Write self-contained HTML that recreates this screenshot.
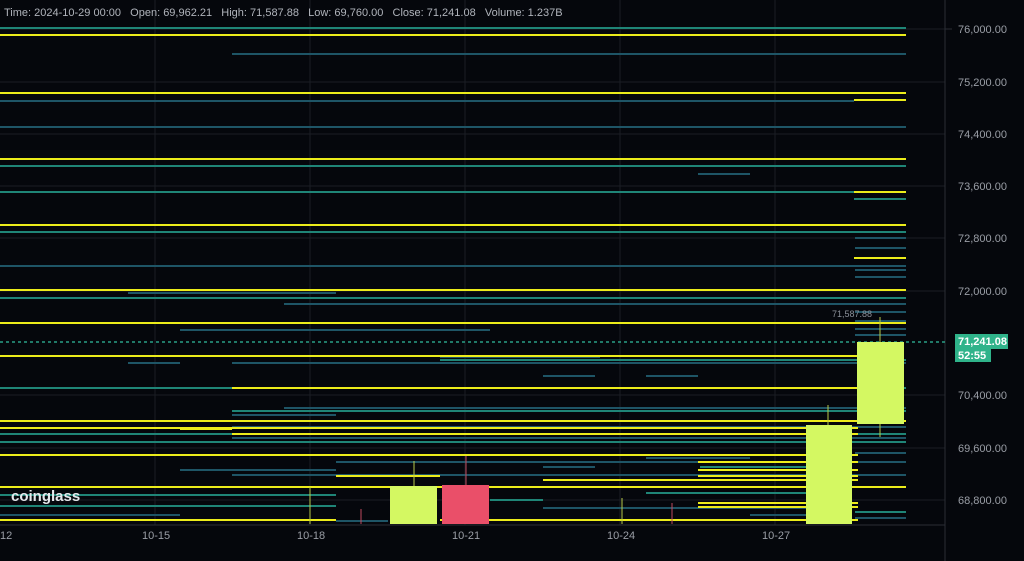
<!DOCTYPE html>
<html><head><style>
html,body{margin:0;padding:0;background:#05070c;width:1024px;height:561px;overflow:hidden;font-family:"Liberation Sans",sans-serif}
</style></head><body>
<svg width="1024" height="561" xmlns="http://www.w3.org/2000/svg" style="position:absolute;left:0;top:0">
<rect width="1024" height="561" fill="#05070c"/>
<g stroke="#1a1d24" stroke-width="1">
<line x1="155" y1="0" x2="155" y2="525"/><line x1="310" y1="0" x2="310" y2="525"/><line x1="465" y1="0" x2="465" y2="525"/><line x1="620" y1="0" x2="620" y2="525"/><line x1="775" y1="0" x2="775" y2="525"/>
<line x1="0" y1="29" x2="945" y2="29"/><line x1="0" y1="82" x2="945" y2="82"/><line x1="0" y1="134" x2="945" y2="134"/><line x1="0" y1="186" x2="945" y2="186"/><line x1="0" y1="238" x2="945" y2="238"/><line x1="0" y1="291" x2="945" y2="291"/><line x1="0" y1="395" x2="945" y2="395"/><line x1="0" y1="448" x2="945" y2="448"/><line x1="0" y1="500" x2="945" y2="500"/>
</g>
<line x1="945" y1="0" x2="945" y2="561" stroke="#2a2d35"/>
<line x1="0" y1="525" x2="945" y2="525" stroke="#2a2d35"/>
<g stroke-width="2">
<!-- teal lines -->
<g stroke="#1f8577">
<line x1="0" y1="28" x2="906" y2="28"/><line x1="0" y1="166" x2="906" y2="166"/><line x1="0" y1="192" x2="854" y2="192"/><line x1="0" y1="232" x2="906" y2="232"/><line x1="0" y1="298" x2="906" y2="298"/><line x1="0" y1="388" x2="906" y2="388"/><line x1="0" y1="434" x2="906" y2="434"/><line x1="0" y1="442" x2="906" y2="442"/><line x1="0" y1="495" x2="336" y2="495"/><line x1="0" y1="506" x2="336" y2="506"/>
<line x1="854" y1="199" x2="906" y2="199"/><line x1="232" y1="411" x2="906" y2="411"/><line x1="440" y1="360" x2="906" y2="360"/><line x1="700" y1="467" x2="850" y2="467"/><line x1="700" y1="480" x2="850" y2="480"/><line x1="646" y1="493" x2="850" y2="493"/><line x1="855" y1="512" x2="906" y2="512"/><line x1="490" y1="500" x2="543" y2="500"/>
</g>
<g stroke="#1e5566">
<line x1="232" y1="54" x2="906" y2="54"/><line x1="0" y1="101" x2="854" y2="101"/><line x1="0" y1="127" x2="906" y2="127"/><line x1="698" y1="174" x2="750" y2="174"/><line x1="0" y1="266" x2="906" y2="266"/><line x1="284" y1="304" x2="906" y2="304"/><line x1="128" y1="293" x2="336" y2="293"/><line x1="180" y1="330" x2="490" y2="330"/><line x1="284" y1="304" x2="336" y2="304"/><line x1="128" y1="363" x2="180" y2="363"/><line x1="232" y1="363" x2="906" y2="363"/><line x1="543" y1="376" x2="595" y2="376"/><line x1="646" y1="376" x2="698" y2="376"/><line x1="284" y1="408" x2="906" y2="408"/><line x1="232" y1="415" x2="336" y2="415"/><line x1="336" y1="421" x2="906" y2="421"/><line x1="232" y1="427" x2="906" y2="427"/><line x1="232" y1="438" x2="906" y2="438"/><line x1="180" y1="470" x2="336" y2="470"/><line x1="232" y1="475" x2="906" y2="475"/><line x1="336" y1="462" x2="906" y2="462"/><line x1="543" y1="467" x2="595" y2="467"/><line x1="0" y1="515" x2="180" y2="515"/><line x1="336" y1="521" x2="388" y2="521"/><line x1="855" y1="238" x2="906" y2="238"/><line x1="855" y1="248" x2="906" y2="248"/><line x1="855" y1="270" x2="906" y2="270"/><line x1="855" y1="277" x2="906" y2="277"/><line x1="855" y1="312" x2="906" y2="312"/><line x1="855" y1="321" x2="906" y2="321"/><line x1="855" y1="329" x2="906" y2="329"/><line x1="855" y1="335" x2="906" y2="335"/><line x1="855" y1="453" x2="906" y2="453"/><line x1="855" y1="518" x2="906" y2="518"/><line x1="440" y1="357" x2="600" y2="357"/><line x1="646" y1="458" x2="750" y2="458"/><line x1="543" y1="508" x2="850" y2="508"/><line x1="750" y1="515" x2="850" y2="515"/>
</g>
<!-- yellow lines -->
<g stroke="#ecec1a">
<line x1="0" y1="35" x2="906" y2="35"/><line x1="0" y1="93" x2="906" y2="93"/><line x1="854" y1="100" x2="906" y2="100"/><line x1="0" y1="159" x2="906" y2="159"/><line x1="854" y1="192" x2="906" y2="192"/><line x1="0" y1="225" x2="906" y2="225"/><line x1="854" y1="258" x2="906" y2="258"/><line x1="0" y1="290" x2="906" y2="290"/><line x1="0" y1="323" x2="906" y2="323"/><line x1="0" y1="356" x2="858" y2="356"/><line x1="232" y1="388" x2="858" y2="388"/><line x1="0" y1="421" x2="906" y2="421"/><line x1="0" y1="428" x2="858" y2="428"/><line x1="180" y1="429" x2="232" y2="429"/><line x1="232" y1="434" x2="858" y2="434"/><line x1="0" y1="455" x2="858" y2="455"/><line x1="336" y1="476" x2="440" y2="476"/><line x1="698" y1="462" x2="858" y2="462"/><line x1="698" y1="470" x2="858" y2="470"/><line x1="698" y1="476" x2="858" y2="476"/><line x1="698" y1="480" x2="858" y2="480"/><line x1="698" y1="487" x2="858" y2="487"/><line x1="0" y1="487" x2="906" y2="487"/><line x1="698" y1="503" x2="858" y2="503"/><line x1="543" y1="480" x2="858" y2="480"/><line x1="0" y1="520" x2="336" y2="520"/><line x1="543" y1="520" x2="858" y2="520"/><line x1="440" y1="520" x2="543" y2="520"/><line x1="698" y1="507" x2="858" y2="507"/>
</g>
</g>
<line x1="0" y1="342" x2="945" y2="342" stroke="#2a9f86" stroke-width="1.5" stroke-dasharray="3,3"/>
<!-- candles -->
<g stroke-width="1">
<line x1="414" y1="461" x2="414" y2="486" stroke="#b7c94a"/>
<line x1="466" y1="456" x2="466" y2="485" stroke="#c04a5e"/>
<line x1="828" y1="405" x2="828" y2="425" stroke="#b7c94a"/>
<line x1="880" y1="317" x2="880" y2="437" stroke="#b7c94a"/>
<line x1="361" y1="509" x2="361" y2="524" stroke="#c04a5e"/>
<line x1="622" y1="498" x2="622" y2="524" stroke="#b7c94a"/>
<line x1="672" y1="503" x2="672" y2="524" stroke="#c04a5e"/>
<line x1="310" y1="487" x2="310" y2="524" stroke="#b7c94a"/>
</g>
<rect x="390" y="486" width="47" height="38" fill="#d4f862"/>
<rect x="442" y="485" width="47" height="39" fill="#ea4f69"/>
<rect x="806" y="425" width="46" height="99" fill="#d4f862"/>
<rect x="857" y="342" width="47" height="82" fill="#d4f862"/>
<!-- axis labels -->
<g fill="#9a9ea6" font-size="11">
<text x="958" y="33">76,000.00</text><text x="958" y="86">75,200.00</text><text x="958" y="138">74,400.00</text><text x="958" y="190">73,600.00</text><text x="958" y="242">72,800.00</text><text x="958" y="295">72,000.00</text><text x="958" y="399">70,400.00</text><text x="958" y="452">69,600.00</text><text x="958" y="504">68,800.00</text>
<text x="0" y="539">12</text><text x="142" y="539">10-15</text><text x="297" y="539">10-18</text><text x="452" y="539">10-21</text><text x="607" y="539">10-24</text><text x="762" y="539">10-27</text>
</g>
<g stroke="#2a2d35"><line x1="945" y1="29" x2="952" y2="29"/></g>
<text x="832" y="317" fill="#8b9099" font-size="9">71,587.88</text>
<rect x="955" y="334" width="53" height="15" fill="#2fb38a"/>
<rect x="955" y="348" width="36" height="14" fill="#2fb38a"/>
<text x="958" y="345" fill="#fff" font-size="11" font-weight="bold">71,241.08</text>
<text x="958" y="359" fill="#fff" font-size="11" font-weight="bold">52:55</text>
<text x="4" y="16" fill="#b0b4bb" font-size="11">Time: 2024-10-29 00:00 &#160;&#160;Open: 69,962.21 &#160;&#160;High: 71,587.88 &#160;&#160;Low: 69,760.00 &#160;&#160;Close: 71,241.08 &#160;&#160;Volume: 1.237B</text>
<text x="11" y="501" fill="#e6e8ec" font-size="15" font-weight="bold">coinglass</text>
</svg>
</body></html>
